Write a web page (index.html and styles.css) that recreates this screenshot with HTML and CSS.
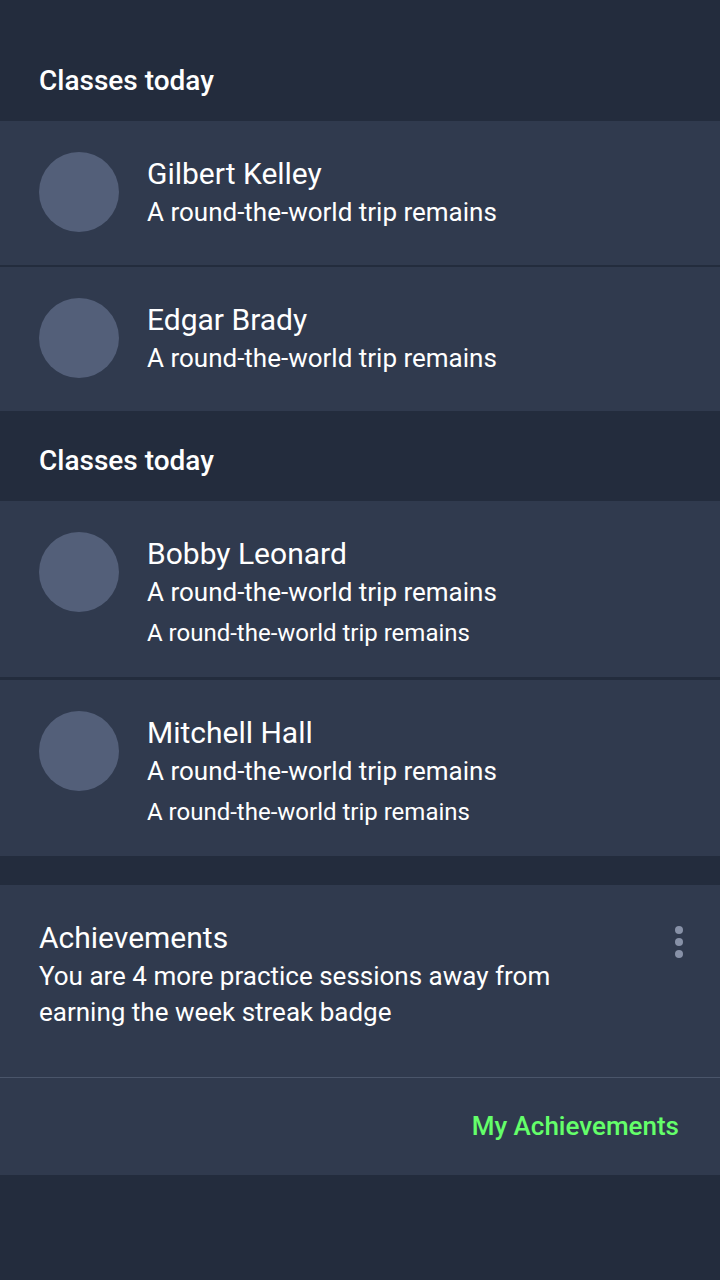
FILE: index.html
```html
<!DOCTYPE html>
<html lang="en">
<head>
<meta charset="utf-8">
<meta name="viewport" content="width=device-width, initial-scale=1">
<title>Classes today</title>
<link rel="stylesheet" href="styles.css">
</head>
<body>
<main class="page">
  <section>
    <h2 class="section-title section-title-first">Classes today</h2>
    <ul class="list">
      <li class="item">
        <span class="avatar"></span>
        <div class="item-text">
          <h3 class="name">Gilbert Kelley</h3>
          <p class="line">A round-the-world trip remains</p>
        </div>
      </li>
      <li class="item">
        <span class="avatar"></span>
        <div class="item-text">
          <h3 class="name">Edgar Brady</h3>
          <p class="line">A round-the-world trip remains</p>
        </div>
      </li>
    </ul>
  </section>
  <section>
    <h2 class="section-title">Classes today</h2>
    <ul class="list list-detailed">
      <li class="item">
        <span class="avatar"></span>
        <div class="item-text">
          <h3 class="name">Bobby Leonard</h3>
          <p class="line">A round-the-world trip remains</p>
          <p class="note">A round-the-world trip remains</p>
        </div>
      </li>
      <li class="item">
        <span class="avatar"></span>
        <div class="item-text">
          <h3 class="name">Mitchell Hall</h3>
          <p class="line">A round-the-world trip remains</p>
          <p class="note">A round-the-world trip remains</p>
        </div>
      </li>
    </ul>
  </section>
  <section class="card">
    <div class="card-body">
      <div class="card-text">
        <h3 class="name">Achievements</h3>
        <p class="line">You are 4 more practice sessions away from earning the week streak badge</p>
      </div>
      <button class="menu" type="button" aria-label="More options">
        <svg width="8" height="32" viewBox="0 0 8 32" fill="currentColor" aria-hidden="true"><circle cx="4" cy="4" r="4"/><circle cx="4" cy="16" r="4"/><circle cx="4" cy="28" r="4"/></svg>
      </button>
    </div>
    <div class="card-footer">
      <a class="link" href="#achievements">My Achievements</a>
    </div>
  </section>
</main>
</body>
</html>
```
FILE: styles.css
```css
* {
  box-sizing: border-box;
  margin: 0;
  padding: 0;
}

body {
  background: #232c3d;
  color: #fff;
  font-family: Roboto, "Liberation Sans", sans-serif;
}

.page {
  min-height: 100vh;
}

.section-title {
  padding: 32px 39px 22px;
  font-size: 28px;
  line-height: 36px;
  font-weight: 500;
}

.section-title-first {
  padding-top: 63px;
}

.list {
  display: flex;
  flex-direction: column;
  gap: 2px;
  list-style: none;
}

.item {
  display: flex;
  gap: 28px;
  padding: 31px 39px 33px;
  background: #303a4e;
}

.list-detailed {
  gap: 3px;
}

.list-detailed .item {
  padding-bottom: 26px;
}

.avatar {
  flex: none;
  width: 80px;
  height: 80px;
  border-radius: 50%;
  background: #535f79;
}

.item-text {
  padding-top: 2px;
}

.name {
  font-size: 30px;
  line-height: 40px;
  font-weight: 400;
}

.line {
  font-size: 26px;
  line-height: 36px;
}

.note {
  padding-top: 5px;
  font-size: 24px;
  line-height: 36px;
}

.card {
  margin-top: 29px;
  background: #303a4e;
}

.card-body {
  display: flex;
  justify-content: space-between;
  align-items: flex-start;
  padding: 33px 29px 47px 39px;
}

.card-text {
  max-width: 560px;
}

.menu {
  display: flex;
  padding: 8px;
  border: 0;
  background: none;
  color: #8791a7;
}

.card-footer {
  display: flex;
  justify-content: flex-end;
  padding: 30px 41px 31px;
  border-top: 1px solid #4a556a;
}

.link {
  color: #64ff6a;
  font-size: 26px;
  line-height: 36px;
  font-weight: 500;
  text-decoration: none;
}
```
